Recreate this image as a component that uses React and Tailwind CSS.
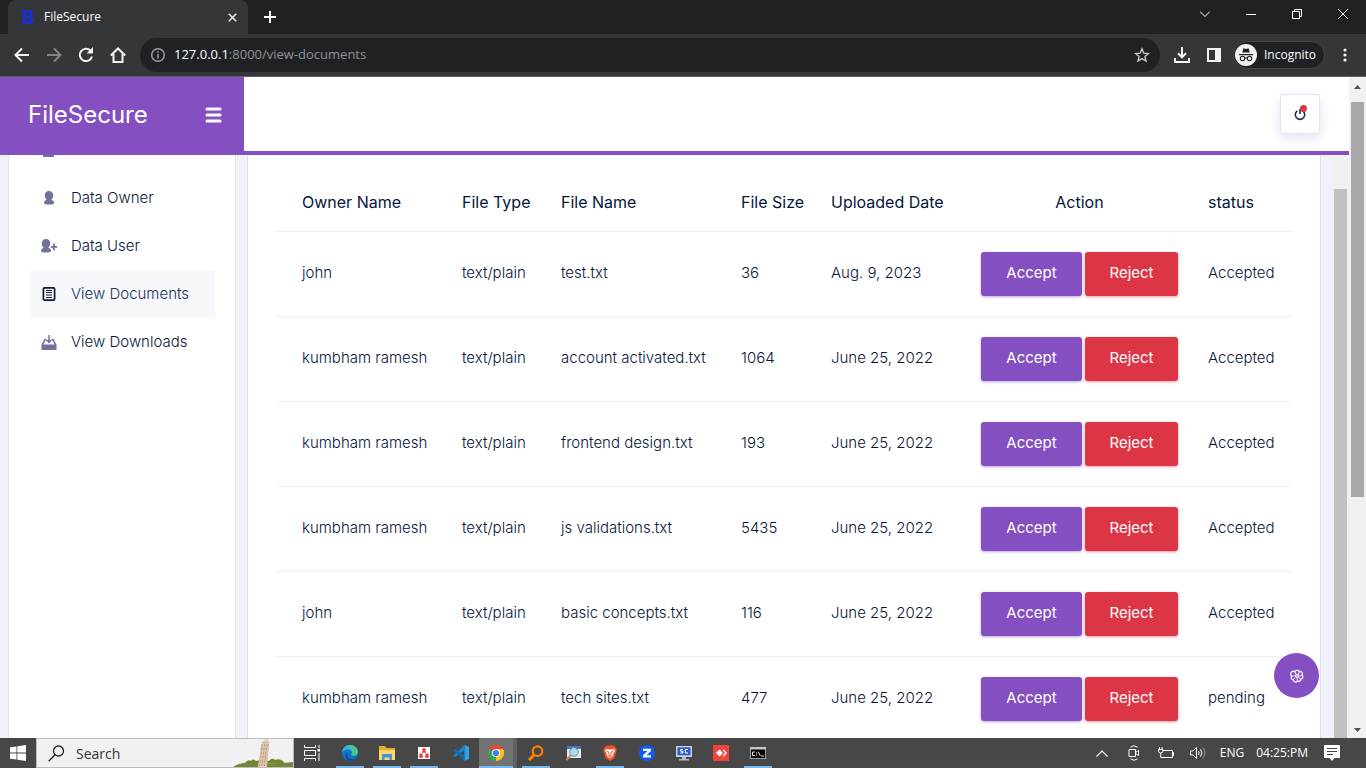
import React from "react";

const rows = [
  ["john", "test.txt", "36", "Aug. 9, 2023", "Accepted"],
  ["kumbham ramesh", "account activated.txt", "1064", "June 25, 2022", "Accepted"],
  ["kumbham ramesh", "frontend design.txt", "193", "June 25, 2022", "Accepted"],
  ["kumbham ramesh", "js validations.txt", "5435", "June 25, 2022", "Accepted"],
  ["john", "basic concepts.txt", "116", "June 25, 2022", "Accepted"],
  ["kumbham ramesh", "tech sites.txt", "477", "June 25, 2022", "pending"],
];

function TabStrip() {
  return (
    <div className="flex h-[34px] shrink-0 items-stretch bg-[#202124] pl-2 text-white">
      <div className="flex w-60 items-center rounded-t-lg bg-[#35363a] pr-2 pl-3.5">
        <svg width="12" height="14" viewBox="0 0 12 14" fill="#1d2fc4" aria-hidden="true">
          <path
            fillRule="evenodd"
            d="M0 0H7.500C10 0 11 1.600 11 3.500C11 5 10.300 6.100 9.200 6.600C10.800 7.100 11.600 8.400 11.600 10C11.600 12.500 10 14 7.400 14H0V11H1V3H0ZM4.500 3V5.500H6.300C7.700 5.500 7.700 3 6.300 3ZM4.500 8.300V11H6.500C8.100 11 8.100 8.300 6.500 8.300Z"
          />
        </svg>
        <span className="ml-2.5 flex-1 text-[12px]">FileSecure</span>
        <button aria-label="Close tab" className="flex size-4 items-center justify-center">
          <svg width="9" height="9" viewBox="0 0 9 9" stroke="#e8eaed" strokeWidth="1.6">
            <path d="M.8.8l7.400 7.400M8.200.8L.8 8.200" />
          </svg>
        </button>
      </div>
      <button aria-label="New tab" className="ml-4 flex items-center">
        <svg width="12" height="12" viewBox="0 0 12 12" stroke="#fff" strokeWidth="2">
          <path d="M6 0v12M0 6h12" />
        </svg>
      </button>
      <div className="ml-auto flex h-7 items-stretch">
        <button aria-label="Search tabs" className="flex w-[46px] items-center justify-center">
          <svg width="10" height="6" viewBox="0 0 10 6" fill="none" stroke="#fff">
            <path d="M0 .5l5 5 5-5" />
          </svg>
        </button>
        <button aria-label="Minimize" className="flex w-[46px] items-center justify-center">
          <svg width="10" height="10" viewBox="0 0 10 10" stroke="#fff">
            <path d="M0 5.500h10" />
          </svg>
        </button>
        <button aria-label="Restore" className="flex w-[46px] items-center justify-center">
          <svg width="10" height="10" viewBox="0 0 10 10" fill="none" stroke="#fff">
            <path d="M.5 2.500h7v7h-7zM2.500 2.500v-2h7v7h-2" />
          </svg>
        </button>
        <button aria-label="Close window" className="flex w-[46px] items-center justify-center">
          <svg width="10" height="10" viewBox="0 0 10 10" stroke="#fff">
            <path d="M0 0l10 10M10 0L0 10" />
          </svg>
        </button>
      </div>
    </div>
  );
}

function Toolbar() {
  return (
    <div className="flex h-[43px] shrink-0 items-center border-b border-[#606064] bg-[#35363a] pr-[19px] pl-[14px]">
      <div className="flex items-center gap-4">
        <button aria-label="Back">
          <svg width="16" height="16" viewBox="0 0 16 16" fill="none" stroke="#f1f3f4" strokeWidth="2">
            <path d="M15 8H2M8 1.500L1.500 8 8 14.500" />
          </svg>
        </button>
        <button aria-label="Forward">
          <svg width="16" height="16" viewBox="0 0 16 16" fill="none" stroke="#84868a" strokeWidth="2">
            <path d="M1 8h13M8 1.500L14.500 8 8 14.500" />
          </svg>
        </button>
        <button aria-label="Reload">
          <svg width="16" height="16" viewBox="0 0 16 16" fill="none" stroke="#f1f3f4" strokeWidth="2">
            <path d="M13 4.200A6.200 6.200 0 1 0 14 9.500" />
            <path d="M15 0v6.500H8.500z" fill="#f1f3f4" stroke="none" />
          </svg>
        </button>
        <button aria-label="Home">
          <svg width="16" height="16" viewBox="0 0 16 16" fill="none" stroke="#f1f3f4" strokeWidth="2">
            <path d="M.8 8.500L8 1.500l7.200 7M3.500 7v8h9V7" />
          </svg>
        </button>
      </div>
      <div className="ml-[14px] flex h-[34px] flex-1 items-center rounded-full bg-[#202124] px-2.5">
        <svg width="16" height="16" viewBox="0 0 16 16" fill="none" stroke="#9aa0a6" strokeWidth="1.500" aria-hidden="true">
          <circle cx="8" cy="8" r="6.300" />
          <path d="M8 7v4.500M8 4.200v1.600" />
        </svg>
        <a href="#url" className="ml-2 flex-1 text-[13px] text-[#8f9398]">
          <span className="text-white">127.0.0.1</span>:8000/view-documents
        </a>
        <button aria-label="Bookmark">
          <svg width="16" height="16" viewBox="0 0 16 16" fill="none" stroke="#c4c7c9" strokeWidth="1.400">
            <path d="M8 1.800l1.800 4.300 4.600.4-3.500 3 1.100 4.500L8 11.600 4 14l1.100-4.500-3.500-3 4.600-.4z" />
          </svg>
        </button>
      </div>
      <button aria-label="Downloads" className="ml-[14px]">
        <svg width="16" height="16" viewBox="0 0 16 16" fill="none" stroke="#f1f3f4" strokeWidth="2">
          <path d="M8 0v10M4 6.300l4 4 4-4M1 11v4h14v-4" />
        </svg>
      </button>
      <button aria-label="Side panel" className="ml-[17px]">
        <svg width="14" height="14" viewBox="0 0 14 14" fill="none" stroke="#f1f3f4" strokeWidth="2">
          <path d="M1 1h12v12H1z" />
          <path d="M9 1h4v12H9z" fill="#f1f3f4" />
        </svg>
      </button>
      <button className="ml-3 flex h-7 w-[92px] items-center rounded-full border border-[#46474b] bg-[#202124] text-[12px] text-white">
        <svg width="24" height="24" viewBox="0 0 24 24" aria-hidden="true">
          <circle cx="12" cy="12" r="11" fill="#f1f3f4" />
          <path d="M8.200 9.500l1.300-4.300 2.500.7 2.500-.7 1.300 4.300zM5 11h14v1.200H5z" fill="#202124" />
          <g fill="none" stroke="#202124" strokeWidth="1.100">
            <circle cx="8.500" cy="15.500" r="2.200" />
            <circle cx="15.500" cy="15.500" r="2.200" />
            <path d="M10.700 15.200q1.300-.8 2.600 0" />
          </g>
        </svg>
        <span className="ml-1.5">Incognito</span>
      </button>
      <button aria-label="Menu" className="ml-[18px]">
        <svg width="4" height="14" viewBox="0 0 4 14" fill="#f1f3f4">
          <circle cx="2" cy="2" r="1.600" />
          <circle cx="2" cy="7" r="1.600" />
          <circle cx="2" cy="12" r="1.600" />
        </svg>
      </button>
    </div>
  );
}

const bust =
  "M8 0c2.600 0 4.200 1.800 4.200 4.200 0 1.900-.8 3.600-1.900 4.400.2.700 2.800 1 2.800 3.400 0 1-2.500 1.500-5.100 1.500S3 13 3 12c0-2.400 2.500-2.700 2.700-3.400-1.100-.8-1.900-2.500-1.900-4.400C3.800 1.800 5.400 0 8 0z";

const menu = [
  {
    label: "Data Owner",
    icon: <path d={bust} />,
  },
  {
    label: "Data User",
    icon: (
      <>
        <path d={bust} transform="translate(-3 0)" />
        <path d="M12 4.500h1.800V7H16v1.700h-2.200v2.500H12V8.700H9.800V7H12z" />
      </>
    ),
  },
  {
    label: "View Documents",
    active: true,
    icon: (
      <g fill="none" stroke="currentColor">
        <rect x="2.400" y=".9" width="11.200" height="12.200" rx="1.200" strokeWidth="1.700" />
        <path d="M5 3.500h6M5 5.500h6M5 8h6M5 10.500h6" strokeWidth="1.100" />
      </g>
    ),
  },
  {
    label: "View Downloads",
    icon: (
      <>
        <path d="M3.500 4H5.500V5.200H4.500L2.300 9.500H13.700L11.500 5.200H10.500V4H12.500L15.500 9.500V15H.5V9.500Z" />
        <path d="M7.300 0H8.700V5H11.200L8 8.500L4.800 5H7.300Z" />
      </>
    ),
  },
];

function Sidebar() {
  return (
    <aside className="ml-2 w-[228px] shrink-0 border-x border-[#e1e0f2] bg-white pr-5 pl-[21px]">
      <div className="flex h-[19px] items-start pl-[13px]">
        <svg width="11" height="2" viewBox="0 0 11 2" fill="#6e7399" aria-hidden="true">
          <path d="M0 0h11v1q0 1-1 1H1Q0 2 0 1z" />
        </svg>
      </div>
      <nav className="flex flex-col">
        {menu.map((m) => (
          <a
            key={m.label}
            href="#menu"
            className={
              m.active
                ? "flex h-12 items-center bg-[#f7f8fc] pl-[11px] text-[15px] font-light text-[#22305a]"
                : "flex h-12 items-center pl-[11px] text-[15px] font-light text-[#06163a]"
            }
          >
            <svg
              width="16"
              height="15"
              viewBox="0 0 16 15"
              fill="currentColor"
              className={m.active ? "text-[#0c1a3e]" : "text-[#6e7399]"}
              aria-hidden="true"
            >
              {m.icon}
            </svg>
            <span className="ml-3.5 whitespace-nowrap">{m.label}</span>
          </a>
        ))}
      </nav>
    </aside>
  );
}

function Documents() {
  const cell = "px-[15px] text-left font-light whitespace-nowrap";
  const head = "px-[15px] text-left font-normal whitespace-nowrap";
  return (
    <main className="ml-[11px] min-w-0 flex-1 border-x border-[#e1e0f2] bg-white px-7 pt-[19px]">
      <table className="w-full table-fixed border-collapse text-[15px] text-[#06163a]">
        <colgroup>
          <col />
          <col className="w-[99px]" />
          <col className="w-[180px]" />
          <col className="w-[90px]" />
          <col className="w-[150px]" />
          <col className="w-[227px]" />
          <col className="w-[99px]" />
        </colgroup>
        <thead>
          <tr className="h-[57px] border-b border-[#efeff2] text-[16px]">
            <th className="pr-[15px] pl-[26px] text-left font-normal whitespace-nowrap">Owner Name</th>
            <th className={head}>File Type</th>
            <th className={head}>File Name</th>
            <th className={head}>File Size</th>
            <th className={head}>Uploaded Date</th>
            <th className="px-[15px] text-center font-normal">Action</th>
            <th className={head}>status</th>
          </tr>
        </thead>
        <tbody>
          {rows.map(([owner, name, size, date, status], i) => (
            <tr key={i} className="h-[85px] border-b border-[#efeff2]">
              <td className="pr-[15px] pl-[26px] font-light whitespace-nowrap">{owner}</td>
              <td className={cell}>text/plain</td>
              <td className={cell}>{name}</td>
              <td className={cell}>{size}</td>
              <td className={cell}>{date}</td>
              <td className="px-[15px]">
                <div className="flex gap-[3px]">
                  <button className="h-11 w-[101px] rounded-[3px] bg-[#844fc1] text-white shadow-[0_1px_3px_#844fc180]">Accept</button>
                  <button className="h-11 w-[93px] rounded-[3px] bg-[#dc3545] text-white shadow-[0_1px_3px_#dc354580]">Reject</button>
                </div>
              </td>
              <td className={cell}>{status}</td>
            </tr>
          ))}
        </tbody>
      </table>
    </main>
  );
}

function Page() {
  return (
    <div className="relative flex min-h-0 flex-1 bg-white font-[family-name:Inter,sans-serif]">
      <div className="flex min-w-0 flex-1 flex-col">
        <header className="flex h-[78px] shrink-0">
          <div className="flex w-[244px] items-center justify-between bg-[#844fc1] pr-[22px] pb-0.5 pl-7 text-white">
            <a href="#home" className="text-[24px]">FileSecure</a>
            <button aria-label="Toggle menu">
              <svg width="17" height="16" viewBox="0 0 17 16" stroke="#fff" strokeWidth="3" strokeLinecap="round">
                <path d="M2 2h13M2 8h13M2 14h13" />
              </svg>
            </button>
          </div>
          <div className="flex flex-1 items-center justify-end border-b-4 border-[#844fc1] bg-white pr-[29px]">
            <button
              aria-label="Log out"
              className="flex size-10 items-center justify-center rounded-[3px] border border-[#e4e2f5] bg-white shadow-[0_4px_12px_#e4e2f5]"
            >
              <svg className="overflow-visible" width="16" height="16" viewBox="0 0 16 16" fill="none">
                <path d="M5.300 4.800a4.700 4.700 0 1 0 5.400 0M8 3v5" stroke="#1c2c50" strokeWidth="1.600" />
                <circle cx="11.500" cy="2.500" r="3.500" fill="#dc3545" />
              </svg>
            </button>
          </div>
        </header>
        <div className="flex min-h-0 flex-1 overflow-hidden bg-[#f1f1f9]">
          <Sidebar />
          <Documents />
          <div className="ml-[11px] flex w-[17px] shrink-0 flex-col bg-[#f1f1f1] px-0.5 pt-[34px]">
            <div className="flex-1 bg-[#c1c1c1]" />
          </div>
        </div>
      </div>
      <div className="flex w-[17px] shrink-0 flex-col items-center bg-[#f1f1f1] pt-2 pb-1.5">
        <svg width="7" height="4" viewBox="0 0 7 4" fill="#505050" aria-hidden="true">
          <path d="M0 4l3.500-4L7 4z" />
        </svg>
        <div className="mt-[13px] h-[61%] w-[13px] bg-[#a8a8a8]" />
        <svg className="mt-auto" width="7" height="4" viewBox="0 0 7 4" fill="#505050" aria-hidden="true">
          <path d="M0 0l3.500 4L7 0z" />
        </svg>
      </div>
      <button
        aria-label="Settings"
        className="absolute right-[47px] bottom-10 flex size-[45px] items-center justify-center rounded-full bg-[#844fc1]"
      >
        <svg width="14" height="14" viewBox="0 0 14 14" fill="none" stroke="#eee4fa" strokeWidth="1.500">
          <circle cx="7" cy="7" r="1.400" />
          <path d="M5 2.800A2.300 2.300 0 0 1 9.300 2.600A2.300 2.300 0 0 1 12 6A2.300 2.300 0 0 1 11 10A2.300 2.300 0 0 1 7.500 12A2.300 2.300 0 0 1 3.300 11A2.300 2.300 0 0 1 1.800 7.200A2.300 2.300 0 0 1 5 2.800Z" />
          <path d="M5 3l1 2.500M9.300 3L8.300 5.500M11.800 6.500L9 7M10.800 10L8.500 8.500M7.300 12V9M3.300 10.500L5.500 8.500M2 7h3" strokeWidth="1" />
        </svg>
      </button>
    </div>
  );
}

const apps = [
  {
    name: "Microsoft Edge",
    open: true,
    art: (
      <>
        <circle cx="8" cy="8" r="8" fill="#1576c8" />
        <path d="M0 8C0 3.500 3.500 0 8 0s8 3.200 8 6.800c0 2.400-1.800 3.900-4 3.900-1.500 0-2.700-.5-2.700-1.200 0-.5.8-.8.8-2C10.100 5.800 8.500 4.500 6 4.500 3 4.500.6 6 0 8z" fill="#2fb5d8" />
        <path d="M8 0c4.500 0 8 3.200 8 6.800 0 2.400-1.800 3.900-4 3.900-1.500 0-2.700-.5-2.700-1.200 0-.5.8-.8.8-2 0-2.600-3-5.500-5-6.700Q6.500 0 8 0z" fill="#5bd25b" opacity=".6" />
        <path d="M6.500 7C4 9.500 6 14.500 11 14c1.500 0 3-.8 3.800-1.500-1 1.800-3.600 3.500-6.800 3.500-3.500 0-5-3.500-4.500-5.500C3.900 8.500 5 7.300 6.500 7z" fill="#0c4fa0" />
      </>
    ),
  },
  {
    name: "File Explorer",
    open: true,
    art: (
      <>
        <path d="M0 1h6l1.500 2H16v12H0z" fill="#e9a92d" />
        <path d="M0 5h16v10H0z" fill="#ffd766" />
        <path d="M3 9h10v6h-2.500v-2.500h-5V15H3z" fill="#3f97dc" />
      </>
    ),
  },
  {
    name: "Diagram",
    open: true,
    art: (
      <>
        <path d="M2 2h12v12H2z" fill="#fff" />
        <g fill="#e5434f">
          <circle cx="8" cy="4.800" r="1.900" />
          <path d="M6 6.200h4v1.500H6z" />
          <circle cx="5" cy="10" r="1.800" />
          <path d="M3.200 11h3.800v1.800H3.200z" />
          <circle cx="11" cy="10" r="1.800" />
          <path d="M9 11h3.800v1.800H9z" />
        </g>
      </>
    ),
  },
  {
    name: "Visual Studio Code",
    art: (
      <>
        <path d="M11.500 0L16 2v12l-4.500 2z" fill="#2ba4e9" />
        <path d="M11.500 0v5L2 12.300.3 10.800z" fill="#1687d0" />
        <path d="M11.500 16v-5L2 3.700.3 5.200z" fill="#0f6fb4" />
      </>
    ),
  },
  {
    name: "Google Chrome",
    open: true,
    current: true,
    art: (
      <>
        <path d="M8 8L1.070 4A8 8 0 0 1 14.930 4z" fill="#e84335" />
        <path d="M8 8l6.930-4A8 8 0 0 1 8 16z" fill="#fbc116" />
        <path d="M8 8v8A8 8 0 0 1 1.070 4z" fill="#31a852" />
        <path d="M8 4h6.930a8 8 0 0 1 .6 6L12 8z" fill="#fbc116" />
        <circle cx="8" cy="8" r="4" fill="#fff" />
        <circle cx="8" cy="8" r="3.100" fill="#3b7ded" />
      </>
    ),
  },
  {
    name: "Everything",
    open: true,
    art: (
      <g fill="none" stroke="#ff8000">
        <circle cx="9.500" cy="6.200" r="4.800" strokeWidth="2.200" />
        <path d="M6 10l-5 5" strokeWidth="3" />
      </g>
    ),
  },
  {
    name: "Finder",
    art: (
      <>
        <path d="M2 1h14v12H2z" fill="#e8edf0" />
        <path d="M2 1h14v3H2z" fill="#3e7cb8" />
        <circle cx="9" cy="7" r="4.300" fill="#a8d9ee" stroke="#75909d" />
        <path d="M6 10l-4.500 5" stroke="#c48b4b" strokeWidth="2.200" />
      </>
    ),
  },
  {
    name: "Brave",
    open: true,
    art: (
      <>
        <path d="M4.500.5h7L14 3l.8 2-2.300 8L8 16l-4.500-3-2.300-8L2 3z" fill="#f94d22" />
        <path d="M4 4l4 .6 4-.6 1 2-2 3 .5 1.200L8 13.500l-3.500-3.300L5 9 3 6z" fill="#fff" />
        <path d="M5 6.200l2 1-.4 2M11 6.200l-2 1 .4 2M6.500 10.500L8 9.800l1.500.7L8 11.800z" fill="none" stroke="#f94d22" />
      </>
    ),
  },
  {
    name: "Zoom",
    art: (
      <>
        <circle cx="8" cy="8" r="8" fill="#0b5cf5" />
        <path d="M4 3.800h8v2.200L7.500 10.200H12v2.300H4v-2.200L8.500 6.100H4z" fill="#fff" />
      </>
    ),
  },
  {
    name: "Screen capture",
    art: (
      <>
        <path d="M0 1h16v11H0z" fill="#c9d3e2" />
        <path d="M1.500 2.300h13v8h-13z" fill="#2c59c7" />
        <path d="M6 12h4v2h3v1.500H3V14h3z" fill="#b9bec6" />
        <path d="M7 4.500H4.500v1.700H7V8H4.200M12 4.500H9.300V8H12" fill="none" stroke="#fff" />
      </>
    ),
  },
  {
    name: "AnyDesk",
    art: (
      <>
        <path d="M0 0h16v16H0z" fill="#ef443b" />
        <path d="M6.500 4.500L10 8l-3.500 3.500L3 8z" fill="#fff" />
        <path d="M9.500 5l1-.8L14 8l-3.500 3.800-1-.8L12 8z" fill="#fff" />
      </>
    ),
  },
  {
    name: "Command Prompt",
    open: true,
    art: (
      <>
        <path d="M0 2h16v12H0z" fill="#c6c6c6" />
        <path d="M.8 4.500h14.400v8.700H.8z" fill="#050505" />
        <path d="M4.800 7H2.500v3.500h2.300M6.500 7.500v1M6.500 9.500v1M8.300 6.800l2 4M11 11h3" fill="none" stroke="#fff" strokeWidth=".9" />
      </>
    ),
  },
];

function Taskbar() {
  return (
    <footer className="flex h-[30px] shrink-0 items-stretch bg-[#474747] text-white">
      <button aria-label="Start" className="flex w-9 shrink-0 items-center justify-center">
        <svg width="16" height="16" viewBox="0 0 16 16" fill="#fff">
          <path d="M0 2.300l6.500-.9v6.200H0zM7.300 1.300L16 0v7.600H7.300zM0 8.400h6.500v6.200L0 13.700zM7.300 8.400H16V16l-8.700-1.300z" />
        </svg>
      </button>
      <label className="flex w-[258px] shrink-0 items-center border border-[#bdbdbd] bg-[#f1f1f1] pl-[11px]">
        <svg width="17" height="17" viewBox="0 0 17 17" fill="none" stroke="#222" strokeWidth="1.300" aria-hidden="true">
          <circle cx="10.500" cy="6" r="5" />
          <path d="M7 9.800l-6.300 6.500" />
        </svg>
        <input
          aria-label="Search"
          placeholder="Search"
          className="ml-[11px] w-0 flex-1 bg-transparent text-[14px] text-[#333] outline-none placeholder:text-[#333]"
        />
        <svg width="60" height="28" viewBox="0 0 60 28" aria-hidden="true">
          <path d="M12 24q3-4 6-2 2-3 5 0l5-1 8 1q3-4 6-1 4-2 8 1l2 3z" fill="#71852b" />
          <path d="M0 28q8-6 24-4t36-1v5z" fill="#70883c" />
          <path d="M25 28L28 6L31 1L34 0L36 2V6L34 28Z" fill="#e6cdb8" />
          <g stroke="#8f6b56" strokeDasharray="1.200 1.200">
            <path d="M28.500 6h7.500M28 10h7.500M27.500 14h7.500M27 18h7.500M26.500 22h7.500M26 26h7.500" />
          </g>
          <path d="M29 3.500h7M28 8h8M27.500 12h8M27 16h8M26.500 20h8M26 24h8" stroke="#c9a78e" strokeWidth=".8" />
        </svg>
      </label>
      <button aria-label="Task view" className="flex w-[37px] shrink-0 items-center justify-center">
        <svg width="17" height="16" viewBox="0 0 17 16" fill="none" stroke="#fff">
          <path d="M.5 0v2.500h11V0M.5 5.500h11v5H.5zM.5 16v-2.500h11V16M15 0v3M15 8v8" />
          <path d="M13.500 4h2.500v2.500h-2.500z" fill="#fff" stroke="none" />
        </svg>
      </button>
      {apps.map((a) => (
        <button
          key={a.name}
          aria-label={a.name}
          className={
            a.current
              ? "flex w-[38px] shrink-0 flex-col items-center border-r-4 border-[#5f6264] bg-[#727272] pt-[7px]"
              : "flex w-[37px] shrink-0 flex-col items-center pt-[7px]"
          }
        >
          <svg width="16" height="16" viewBox="0 0 16 16" aria-hidden="true">
            {a.art}
          </svg>
          {a.open && <span className={a.current ? "mt-auto h-0.5 w-full bg-[#76b9ed]" : "mt-auto h-0.5 w-7 bg-[#76b9ed]"} />}
        </button>
      ))}
      <div className="ml-auto flex items-center pr-[26px] text-[12px]">
        <button aria-label="Show hidden icons">
          <svg width="12" height="7" viewBox="0 0 12 7" fill="none" stroke="#fff" strokeWidth="1.200">
            <path d="M.5 6.500L6 1l5.500 5.500" />
          </svg>
        </button>
        <svg className="ml-5" width="12" height="16" viewBox="0 0 12 16" fill="none" stroke="#fff" role="img" aria-label="Camera">
          <path d="M1 4.500h6.500v7H1zM7.500 7.500l3-2v5l-3-2M2.500 2.200q3.500-3 7 0M2.500 13.800q3.500 3 7 0" />
        </svg>
        <svg className="ml-[18px]" width="16" height="12" viewBox="0 0 16 12" fill="none" stroke="#fff" role="img" aria-label="Battery">
          <path d="M5 3.500h9.500v7H4M14.500 5.500h1v3h-1M1.500 0v2.500M4 0v2.500M.5 2.500H5V4Q5 6 2.700 6T.5 4zM2.700 6v4.500H4" />
        </svg>
        <svg className="ml-4" width="16" height="14" viewBox="0 0 16 14" fill="none" stroke="#fff" role="img" aria-label="Volume">
          <path d="M.5 5h2.500l3.500-3.500v11L3 9H.5zM8.500 5q1.300 2 0 4M10.500 3.300q2.700 3.700 0 7.400" />
          <path d="M12.700 1.500q4.300 5.500 0 11" stroke="#999" />
        </svg>
        <span className="ml-3.5">ENG</span>
        <span className="ml-3">04:25:PM</span>
        <button aria-label="Notifications" className="ml-4">
          <svg width="16" height="16" viewBox="0 0 16 16">
            <path d="M0 0h16v13h-5.500L8 16l-2.500-3H0z" fill="#fff" />
            <path d="M3 3.500h10M3 6.500h10M3 9.500h6" stroke="#474747" />
          </svg>
        </button>
      </div>
    </footer>
  );
}

export default function App() {
  return (
    <div className="flex h-screen flex-col overflow-hidden font-[family-name:'Open_Sans',sans-serif]">
      <TabStrip />
      <Toolbar />
      <Page />
      <Taskbar />
    </div>
  );
}
